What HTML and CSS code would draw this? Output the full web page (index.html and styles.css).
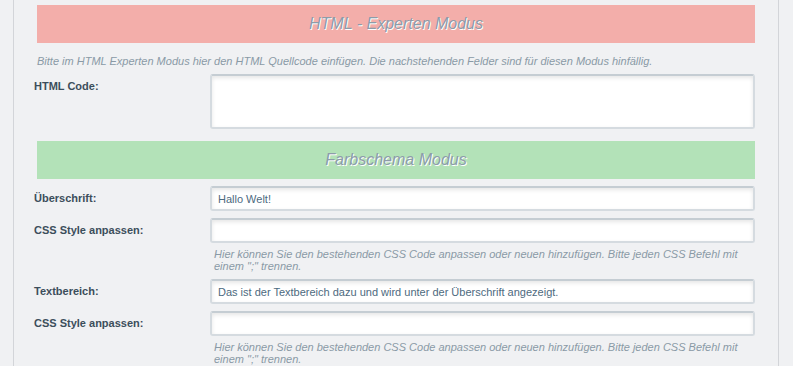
FILE: index.html
```html
<!DOCTYPE html>
<html lang="de">
<head>
    <meta charset="UTF-8">
    <meta name="viewport" content="width=device-width, initial-scale=1.0">
    <title>Modul bearbeiten</title>
    <link rel="stylesheet" href="styles.css">
</head>
<body>
    <div class="panel">
        <h2 class="head head-expert">HTML - Experten Modus</h2>
        <p class="desc">Bitte im HTML Experten Modus hier den HTML Quellcode einfügen. Die nachstehenden Felder sind für diesen Modus hinfällig.</p>
        <div class="row">
            <label for="html">HTML Code:</label>
            <textarea id="html" class="field area"></textarea>
        </div>

        <h2 class="head head-scheme">Farbschema Modus</h2>
        <div class="row">
            <label for="title">Überschrift:</label>
            <input type="text" id="title" class="field" value="Hallo Welt!">
        </div>
        <div class="row">
            <label for="titleCss">CSS Style anpassen:</label>
            <div>
                <input type="text" id="titleCss" class="field">
                <p class="hint">Hier können Sie den bestehenden CSS Code anpassen oder neuen hinzufügen. Bitte jeden CSS Befehl mit einem ";" trennen.</p>
            </div>
        </div>
        <div class="row">
            <label for="text">Textbereich:</label>
            <input type="text" id="text" class="field" value="Das ist der Textbereich dazu und wird unter der Überschrift angezeigt.">
        </div>
        <div class="row">
            <label for="textCss">CSS Style anpassen:</label>
            <div>
                <input type="text" id="textCss" class="field">
                <p class="hint">Hier können Sie den bestehenden CSS Code anpassen oder neuen hinzufügen. Bitte jeden CSS Befehl mit einem ";" trennen.</p>
            </div>
        </div>
    </div>
</body>
</html>
```

FILE: styles.css
```css
body {
    margin: 0;
    background-color: #f0f1f3;
    font-family: "Liberation Sans", Arial, sans-serif;
    font-size: 11px;
    color: #3c4e5b;
}
.panel {
    margin: 0 14px 0 13px;
    border-left: 1px solid #d3d5d9;
    border-right: 1px solid #d3d5d9;
    padding: 5px 23px 0 20px;
    min-height: 366px;
    box-sizing: border-box;
}
.head {
    margin: 0 0 0 3px;
    height: 38px;
    line-height: 38px;
    text-align: center;
    font-size: 16px;
    font-weight: normal;
    font-style: italic;
    color: #8d9ca9;
    text-shadow: 1px 1px 0 #fff;
}
.head-expert {
    background-color: #f3aeaa;
}
.head-scheme {
    background-color: #b3e2b8;
    margin-top: 12px;
}
.desc {
    margin: 11px 0 0 3px;
    line-height: 14px;
    font-style: italic;
    color: #8a9aa6;
}
.row {
    display: grid;
    grid-template-columns: 176px 1fr;
    margin-top: 7px;
}
.desc + .row {
    margin-top: 6px;
}
.row label {
    padding-top: 5px;
    line-height: 14px;
    font-weight: bold;
}
.field {
    display: block;
    width: 100%;
    height: 25px;
    box-sizing: border-box;
    margin: 0;
    padding: 0 6px;
    border: 2px solid #d5dbe0;
    border-top-color: #c5cdd3;
    border-radius: 3px;
    background-color: #fff;
    box-shadow: inset 0 2px 4px rgba(0, 0, 0, 0.1);
    font-family: inherit;
    font-size: 11px;
    color: #4d6a80;
    outline: none;
}
.area {
    height: 55px;
    resize: none;
}
.hint {
    margin: 5px 0 0 4px;
    line-height: 12px;
    font-style: italic;
    color: #8a9aa6;
}
```
